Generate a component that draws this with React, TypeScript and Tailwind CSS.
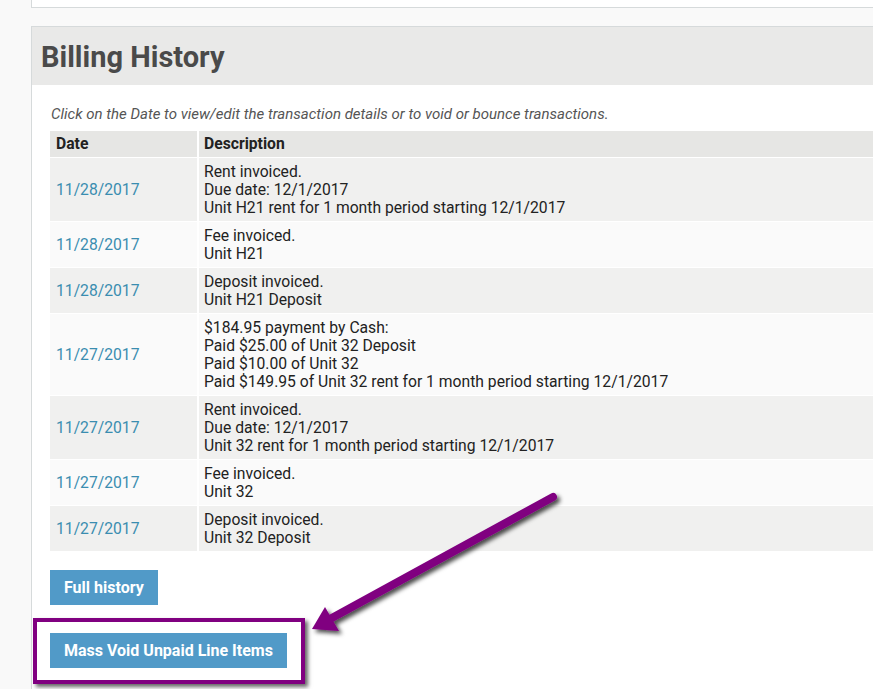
import React from "react";

const rows: { date: string; lines: string[] }[] = [
  { date: "11/28/2017", lines: ["Rent invoiced.", "Due date: 12/1/2017", "Unit H21 rent for 1 month period starting 12/1/2017"] },
  { date: "11/28/2017", lines: ["Fee invoiced.", "Unit H21"] },
  { date: "11/28/2017", lines: ["Deposit invoiced.", "Unit H21 Deposit"] },
  {
    date: "11/27/2017",
    lines: [
      "$184.95 payment by Cash:",
      "Paid $25.00 of Unit 32 Deposit",
      "Paid $10.00 of Unit 32",
      "Paid $149.95 of Unit 32 rent for 1 month period starting 12/1/2017",
    ],
  },
  { date: "11/27/2017", lines: ["Rent invoiced.", "Due date: 12/1/2017", "Unit 32 rent for 1 month period starting 12/1/2017"] },
  { date: "11/27/2017", lines: ["Fee invoiced.", "Unit 32"] },
  { date: "11/27/2017", lines: ["Deposit invoiced.", "Unit 32 Deposit"] },
];

export default function App() {
  return (
    <div
      className="relative min-h-[689px] w-[873px] overflow-hidden bg-[#f9f9f9] pl-[31px]"
      style={{ fontFamily: "Roboto, 'Liberation Sans', sans-serif" }}
    >
      <div className="h-[8px] border-b border-l border-[#d6dadb] bg-white" />
      <div className="mt-[18px] min-h-[663px] border-l border-t border-[#d6dadb] bg-white">
        <div className="flex h-[58px] items-center bg-[#e9e9e8] pl-[9px] pt-[2px]">
          <h1 className="text-[29px] font-bold leading-none text-[#4a4a4a]">Billing History</h1>
        </div>
        <div className="pl-[18px] pt-[20px]">
          <p className="pl-[1px] text-[15px] italic leading-[18px] text-[#555]">
            Click on the Date to view/edit the transaction details or to void or bounce transactions.
          </p>
          <div className="mt-[8px] grid w-[900px] grid-cols-[147px_1fr] gap-x-[2px] gap-y-[1px] text-[15.7px] leading-[18px]">
            <div className="bg-[#e6e6e4] px-[6px] py-[4px] font-bold text-[#222]">Date</div>
            <div className="bg-[#e6e6e4] px-[5px] py-[4px] font-bold text-[#222]">Description</div>
            {rows.map((r, i) => (
              <React.Fragment key={i}>
                <div
                  className={`flex items-center px-[6px] pb-[4px] pt-[5px] text-[#3a8db0] ${
                    i % 2 === 0 ? "bg-[#f0f0ef]" : "bg-[#fafafa]"
                  }`}
                >
                  {r.date}
                </div>
                <div
                  className={`px-[5px] pb-[4px] pt-[5px] text-[#222] ${
                    i % 2 === 0 ? "bg-[#f0f0ef]" : "bg-[#fafafa]"
                  }`}
                >
                  {r.lines.map((l, j) => (
                    <div key={j}>{l}</div>
                  ))}
                </div>
              </React.Fragment>
            ))}
          </div>
          <div className="mt-[19px] flex flex-col items-start gap-[28px]">
            <button className="h-[35px] bg-[#519ac8] px-[14px] text-[16px] font-bold text-white">Full history</button>
            <button className="h-[35px] bg-[#519ac8] px-[14px] text-[16px] font-bold text-white">
              Mass Void Unpaid Line Items
            </button>
          </div>
        </div>
      </div>

      {/* purple highlight box */}
      <div className="absolute left-[33px] top-[618px] h-[66px] w-[272px] border-[4px] border-[#800080] shadow-[3px_3px_4px_rgba(0,0,0,0.6)]" />

      {/* arrow */}
      <svg className="absolute left-0 top-0" width="873" height="689" viewBox="0 0 873 689">
        <defs>
          <filter id="sh" x="-20%" y="-20%" width="140%" height="140%">
            <feDropShadow dx="3" dy="3" stdDeviation="2" floodColor="#000" floodOpacity="0.7" />
          </filter>
        </defs>
        <g filter="url(#sh)">
          <line x1="553" y1="497" x2="330" y2="619" stroke="#800080" strokeWidth="8" strokeLinecap="round" />
          <polygon points="312,629 325,607 339,631" fill="#800080" />
        </g>
      </svg>
    </div>
  );
}
